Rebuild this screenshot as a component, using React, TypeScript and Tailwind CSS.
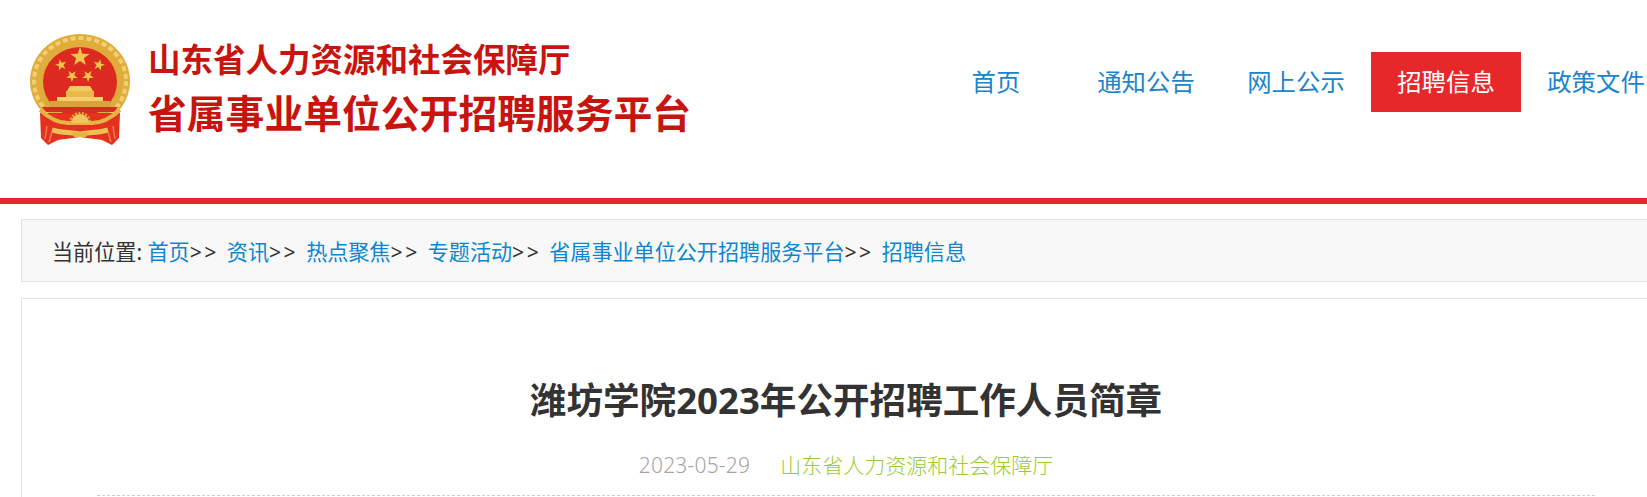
const CJK = "font-['Noto_Sans','Noto_Sans_CJK_SC',sans-serif]";

const NAV = ["首页", "通知公告", "网上公示", "招聘信息", "政策文件"];
const CRUMBS = ["首页", "资讯", "热点聚焦", "专题活动", "省属事业单位公开招聘服务平台", "招聘信息"];

function star(cx: number, cy: number, r: number, rot = 0) {
  const pts: string[] = [];
  for (let i = 0; i < 10; i++) {
    const rad = i % 2 === 0 ? r : r * 0.4;
    const a = ((-90 + rot + i * 36) * Math.PI) / 180;
    pts.push(`${(cx + rad * Math.cos(a)).toFixed(2)},${(cy + rad * Math.sin(a)).toFixed(2)}`);
  }
  return pts.join(" ");
}

function Emblem() {
  return (
    <svg width="130" height="130" viewBox="0 0 130 130" className="shrink-0 blur-[0.5px]">
      <ellipse cx="60" cy="61" rx="50" ry="47" fill="#e0ad3c" />
      <ellipse cx="60" cy="61" rx="46" ry="43" fill="none" stroke="#f2cf72" strokeWidth="4" strokeDasharray="5 3" />
      <ellipse cx="60" cy="62" rx="37" ry="35" fill="#dd2a20" />
      <polygon points={star(60, 37, 10)} fill="#f0c548" />
      <polygon points={star(41, 45, 6, -15)} fill="#f0c548" />
      <polygon points={star(79, 45, 6, 15)} fill="#f0c548" />
      <polygon points={star(52, 56, 6, -35)} fill="#f0c548" />
      <polygon points={star(68, 56, 6, 35)} fill="#f0c548" />
      <path d="M50 66h20l3 5H47z" fill="#f0ca62" />
      <path d="M46 71h28v6H46z" fill="#e8b94a" />
      <path d="M37 77h46v4H37z" fill="#f2d070" />
      <path d="M30 81h60v6H30z" fill="#dba23a" />
      <path d="M22 87h76l-4 5H26z" fill="#dd2a20" />
      <path d="M20 93h80l-1 25-7 7-10-5-22-3-22 3-10 5-7-7z" fill="#e4321f" />
      <path d="M20 90C30 99 38 103 48 103H72C82 103 90 99 100 90" fill="none" stroke="#e6b443" strokeWidth="4" />
      <path d="M51 103a9 9 0 0 1 18 0z" fill="#efc75c" />
      <path d="M50 103a10 10 0 0 1 20 0" fill="none" stroke="#e0ad3c" strokeWidth="2.5" strokeDasharray="2 1.5" />
      <path d="M32 110C42 113 50 112 60 114C70 112 78 113 88 110" fill="none" stroke="#ecc052" strokeWidth="5" />
      <path d="M52 112h16l-2 5H54z" fill="#e6b443" />
      <path d="M88 112l3 10M93 106l2 13M32 112l-3 10M27 106l-2 13" stroke="#f07a62" strokeWidth="1.5" fill="none" />
    </svg>
  );
}

export default function App() {
  return (
    <div className={`h-[497px] w-full overflow-hidden bg-white ${CJK}`}>
      <div className="w-[1671px]">
        <header className="flex h-[204px] justify-between border-b-[6px] border-[#e6282b]">
          <div className="flex items-start pl-[20px] pt-[20px]">
            <Emblem />
            <div className="-ml-[2px] pt-[18px] text-[#c8140f]">
              <h1 className="text-[32.5px] leading-[44px] font-bold whitespace-nowrap">山东省人力资源和社会保障厅</h1>
              <p className="mt-[6px] text-[38.8px] leading-[50px] font-bold whitespace-nowrap">省属事业单位公开招聘服务平台</p>
            </div>
          </div>
          <nav className="flex w-[750px] items-start pt-[52px]">
            {NAV.map((item) => (
              <a
                key={item}
                className={`flex h-[60px] w-[150px] items-center justify-center text-[24.4px] leading-[62px] ${
                  item === "招聘信息" ? "bg-[#e6282b] text-white" : "text-[#1c84cc]"
                }`}
              >
                {item}
              </a>
            ))}
          </nav>
        </header>
        <div className="mt-[15px] ml-[21px] flex h-[63px] w-[1650px] items-center border border-[#e2e2e2] bg-[#f8f8f8] pt-[2px] pl-[30px] text-[21.1px] leading-[36px] whitespace-pre text-[#333]">
          <span>当前位置: </span>
          {CRUMBS.map((c, i) => (
            <span key={c + i}>
              <a className="text-[#0b87d0]">{c}</a>
              {i < CRUMBS.length - 1 && <span className="tracking-[2.5px]">{">> "}</span>}
            </span>
          ))}
        </div>
        <main className="mt-[16px] ml-[21px] h-[400px] w-[1650px] border border-[#e2e2e2] px-[75px] pt-[74px]">
          <h2 className="text-center text-[36.6px] leading-[54px] font-bold text-[#333]">潍坊学院2023年公开招聘工作人员简章</h2>
          <div className="mt-[22px] flex h-[47px] justify-center gap-[30px] border-b border-dashed border-[#ccc] text-[21px] leading-[32px]">
            <span className="font-light tracking-[0.2px] text-[#a5a5a5]">2023-05-29</span>
            <span className="font-light text-[#9c3]">山东省人力资源和社会保障厅</span>
          </div>
        </main>
      </div>
    </div>
  );
}
